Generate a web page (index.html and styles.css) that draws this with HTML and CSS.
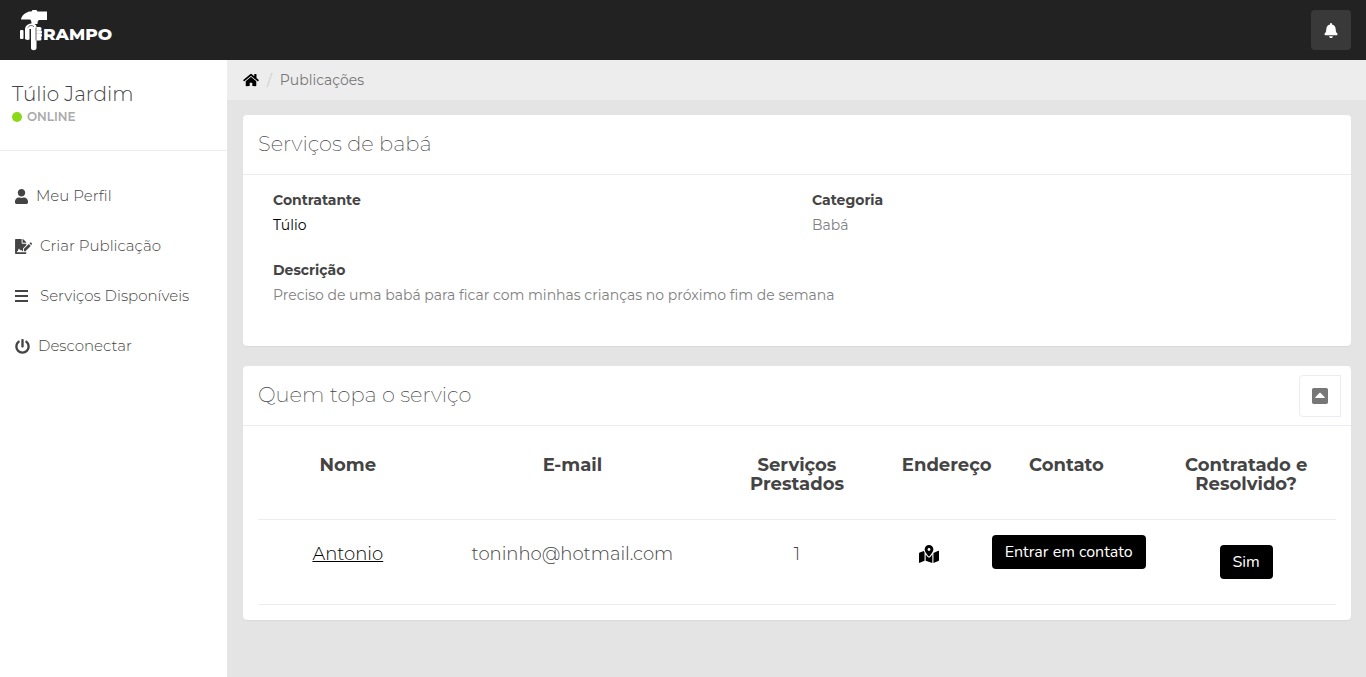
FILE: index.html
```html
<!DOCTYPE html>
<html lang="pt-BR">
<head>
<meta charset="utf-8">
<title>Trampo</title>
<meta name="viewport" content="width=device-width, initial-scale=1">
<link rel="stylesheet" href="styles.css">
</head>
<body>
<header class="topbar">
  <a class="brand" href="#" aria-label="Trampo">
    <svg class="brand-mark" viewBox="0 0 28 42" width="28" height="42" aria-hidden="true">
      <path fill="#fff" d="M1 10.500C1.500 7 4.500 4 9 2.500h2.500l1-1.500h4l1 1.500H27v8.500h-8c-1 .5-1.500 1.500-1.500 4h-6c0-2.500-.5-4-1.500-4.500z"/>
      <rect fill="#fff" x="0" y="21" width="3.500" height="9" rx="1"/>
      <path fill="#fff" d="M5 30V21c0-4 2.500-6 6-6.500 3.500-.3 5.500 1 5.500 3.500v21c0 3-5.500 3-5.500 0V20H9.500v10.500c-1.500.8-3 .5-4.500-.5z"/>
      <path fill="none" stroke="#222" stroke-width=".7" d="M10.500 31V20M8 18.500c1.500-2.500 4.500-2.500 6-.5"/>
      <rect fill="#fff" x="15.500" y="18" width="6" height="3.600" rx="1.500"/>
      <rect fill="#fff" x="15.500" y="21.200" width="6.500" height="3.600" rx="1.500"/>
      <rect fill="#fff" x="15.500" y="24.500" width="6.500" height="3.600" rx="1.500"/>
      <rect fill="#fff" x="15.500" y="27.800" width="6" height="3.600" rx="1.500"/>
      <path fill="none" stroke="#222" stroke-width=".7" d="M16 18.500v13"/>
    </svg>
    <span class="brand-name">RAMPO</span>
  </a>
  <button class="bell" type="button" aria-label="Notificações">
    <svg viewBox="0 0 448 512" width="14" height="15"><path d="M224 512c35.320 0 63.970-28.650 63.970-64H160.030c0 35.350 28.650 64 63.970 64zm215.390-149.710c-19.320-20.760-55.470-51.990-55.470-154.290 0-77.700-54.480-139.900-127.940-155.160V32c0-17.670-14.320-32-31.980-32s-31.980 14.330-31.980 32v20.840C118.560 68.100 64.080 130.300 64.080 208c0 102.300-36.150 133.530-55.470 154.290-6 6.450-8.660 14.160-8.610 21.710.11 16.400 12.980 32 32.100 32h383.800c19.120 0 32-15.600 32.100-32 .05-7.550-2.610-15.270-8.610-21.710z"/></svg>
  </button>
</header>
<div class="layout">
  <aside class="sidebar">
    <div class="profile">
      <div class="profile-name">Túlio Jardim</div>
      <div class="status">ONLINE</div>
    </div>
    <nav class="menu">
      <a href="#">
        <svg viewBox="0 0 448 512" width="13" height="15"><path d="M224 256c70.700 0 128-57.300 128-128S294.700 0 224 0 96 57.300 96 128s57.300 128 128 128zm89.600 32h-16.700c-22.200 10.200-46.900 16-72.900 16s-50.600-5.800-72.900-16h-16.700C60.200 288 0 348.200 0 422.400V464c0 26.500 21.500 48 48 48h352c26.500 0 48-21.500 48-48v-41.600c0-74.200-60.200-134.400-134.400-134.400z"/></svg>
        Meu Perfil
      </a>
      <a href="#">
        <svg viewBox="0 0 576 512" width="17" height="15"><path d="M24 0h200v136c0 13 11 24 24 24h136v49L272 320v96h-12c-10 0-14-6-19-15-14-28-50-33-72-11l-14-43c-7-20-31-20-38 0l-18 55c-2 8-9 14-18 14H64v32h320v40c0 13-11 24-24 24H24c-13 0-24-11-24-24V24C0 11 11 0 24 0z"/><path d="M256 0h6c6 0 12 3 17 7l98 98c4 5 7 11 7 17v6H256zM304 334l163-162 68 68-163 163v13h-68zM490 149l22-22c12-12 31-12 43 0l14 14c10 11 10 29 0 40l-11 34z"/></svg>
        Criar Publicação
      </a>
      <a href="#">
        <svg viewBox="0 0 17 15" width="17" height="15"><path d="M0 1h13v2H0zM0 6h13v2H0zM0 11h13v2H0z"/></svg>
        Serviços Disponíveis
      </a>
      <a href="#">
        <svg viewBox="0 0 512 512" width="15" height="15"><path d="M400 54.100c63 45 104 118.600 104 201.900 0 136.800-110.800 247.700-247.500 248C120 504.300 8.200 393 8 256.400 7.900 173.100 48.900 99.300 111.800 54.200c11.700-8.300 28-4.800 35 7.700L162.600 90c5.900 10.500 3.100 23.800-6.600 31-41.500 30.800-68 79.600-68 134.900-.1 92.300 74.500 168.100 168 168.100 91.600 0 168.600-74.200 168-169.100-.3-51.800-24.700-101.800-68.100-134-9.700-7.200-12.400-20.500-6.500-30.900l15.800-28.100c7-12.400 23.200-16.100 34.800-7.800zM296 264V24c0-13.300-10.700-24-24-24h-32c-13.300 0-24 10.700-24 24v240c0 13.300 10.700 24 24 24h32c13.300 0 24-10.700 24-24z"/></svg>
        Desconectar
      </a>
    </nav>
  </aside>
  <main class="main">
    <nav class="breadcrumb" aria-label="Trilha">
      <a href="#" aria-label="Início"><svg viewBox="0 0 576 512" width="16" height="14"><path d="M280.370 148.260L96 300.110V464a16 16 0 0 0 16 16l112.060-.29a16 16 0 0 0 15.920-16V368a16 16 0 0 1 16-16h64a16 16 0 0 1 16 16v95.640a16 16 0 0 0 16 16.050L464 480a16 16 0 0 0 16-16V300L295.670 148.260a12.190 12.190 0 0 0-15.300 0zM571.600 251.470L488 182.560V44.050a12 12 0 0 0-12-12h-56a12 12 0 0 0-12 12v72.610L318.470 43a48 48 0 0 0-61 0L4.340 251.470a12 12 0 0 0-1.600 16.900l25.500 31A12 12 0 0 0 45.150 301l235.220-193.740a12.190 12.190 0 0 1 15.300 0L530.900 301a12 12 0 0 0 16.900-1.600l25.500-31a12 12 0 0 0-1.700-16.930z"/></svg></a>
      <span class="slash">/</span>
      <span>Publicações</span>
    </nav>
    <div class="content">
      <section class="card">
        <div class="card-head"><h2>Serviços de babá</h2></div>
        <dl class="details">
          <div><dt>Contratante</dt><dd><a href="#">Túlio</a></dd></div>
          <div><dt>Categoria</dt><dd>Babá</dd></div>
          <div class="wide"><dt>Descrição</dt><dd>Preciso de uma babá para ficar com minhas crianças no próximo fim de semana</dd></div>
        </dl>
      </section>
      <section class="card">
        <div class="card-head">
          <h2>Quem topa o serviço</h2>
          <button class="collapse" type="button" aria-label="Recolher">
            <svg viewBox="0 32 448 448" width="16" height="16"><path d="M0 432V80c0-26.510 21.490-48 48-48h352c26.510 0 48 21.490 48 48v352c0 26.510-21.490 48-48 48H48c-26.510 0-48-21.490-48-48zm355.515-140.485l-123.030-123.030c-4.686-4.686-12.284-4.686-16.971 0L92.485 291.515c-7.560 7.560-2.206 20.485 8.485 20.485h246.059c10.691 0 16.045-12.926 8.486-20.485z"/></svg>
          </button>
        </div>
        <div class="table-wrap">
          <table class="people">
            <colgroup><col class="c2"><col class="c3"><col class="c2"><col class="c1"><col class="c2"><col class="c2"></colgroup>
            <thead>
              <tr><th>Nome</th><th>E-mail</th><th>Serviços Prestados</th><th>Endereço</th><th>Contato</th><th>Contratado e Resolvido?</th></tr>
            </thead>
            <tbody>
              <tr>
                <td><a class="name" href="#">Antonio</a></td>
                <td>toninho@hotmail.com</td>
                <td>1</td>
                <td><a class="map" href="#" aria-label="Ver no mapa"><svg viewBox="0 0 576 512" width="20" height="18"><path d="M288 0c-69.590 0-126 56.410-126 126 0 56.260 82.350 158.800 113.900 196.020 6.390 7.540 17.820 7.540 24.200 0C331.650 284.800 414 182.260 414 126 414 56.410 357.590 0 288 0zm0 168c-23.200 0-42-18.800-42-42s18.800-42 42-42 42 18.800 42 42-18.800 42-42 42zM20.120 215.950A32.006 32.006 0 0 0 0 245.660v250.320c0 11.320 11.430 19.060 21.940 14.860L160 448V214.920c-8.840-15.980-16.070-31.540-21.250-46.420L20.120 215.950zM288 359.670c-14.070 0-27.380-6.180-36.510-16.960-19.660-23.200-40.570-49.620-59.490-76.720v182l192 64V266c-18.920 27.090-39.820 53.520-59.490 76.720-9.130 10.770-22.440 16.950-36.510 16.950zm266.060-198.510L416 224v288l139.880-55.950A31.996 31.996 0 0 0 576 426.340V176.020c0-11.320-11.430-19.060-21.940-14.860z"/></svg></a></td>
                <td class="action contact"><button class="btn" type="button">Entrar em contato</button></td>
                <td class="action confirm"><button class="btn" type="button">Sim</button></td>
              </tr>
            </tbody>
          </table>
        </div>
      </section>
    </div>
  </main>
</div>
</body>
</html>
```
FILE: styles.css
```css
* { box-sizing: border-box; }
body {
  margin: 0;
  min-height: 100vh;
  display: flex;
  flex-direction: column;
  font: 300 15px/20px Montserrat, Inter, "Open Sans", sans-serif;
  color: #444;
  background: #e4e4e4;
}
a { color: inherit; text-decoration: none; }
svg { display: block; flex: none; fill: currentColor; }
h2, dl, dd { margin: 0; }

.topbar {
  display: flex;
  align-items: center;
  justify-content: space-between;
  height: 60px;
  padding: 0 15px 0 20px;
  background: #222;
}
.brand { display: flex; align-items: center; color: #fff; }
.brand-name { margin: 8px 0 0 -5px; font-size: 17px; font-weight: 800; }
.bell {
  display: grid;
  place-items: center;
  width: 40px;
  height: 40px;
  padding: 0;
  border: 0;
  border-radius: 4px;
  background: #393939;
  color: #fff;
}

.layout { display: flex; flex: 1; }
.sidebar { flex: none; width: 227px; background: #fff; }
.profile { height: 91px; padding: 22px 12px 0; border-bottom: 1px solid #e9ecf2; }
.profile-name { font-size: 20px; line-height: 25px; }
.status {
  display: flex;
  align-items: center;
  gap: 5px;
  font-size: 12px;
  font-weight: 600;
  color: #aaa;
}
.status::before {
  content: "";
  width: 10px;
  height: 10px;
  border-radius: 50%;
  background: #8ad919;
}
.menu { padding-top: 20px; }
.menu a {
  display: flex;
  align-items: center;
  gap: 8px;
  height: 50px;
  padding: 0 15px;
}

.main { flex: 1; min-width: 0; }
.breadcrumb {
  display: flex;
  align-items: center;
  gap: 8px;
  height: 40px;
  padding: 0 16px;
  font-size: 14px;
  font-weight: 400;
  color: #777;
  background: #ededed;
}
.breadcrumb a { color: #000; }
.slash { color: #ccc; }
.content { display: grid; gap: 20px; padding: 15px 15px 20px 16px; }

.card { background: #fff; border-radius: 4px; box-shadow: 0 1px 1px rgba(0, 0, 0, .05); }
.card-head {
  display: flex;
  align-items: center;
  justify-content: space-between;
  height: 60px;
  padding: 0 10px 0 15px;
  border-bottom: 1px solid #e9ecf2;
}
.card-head h2 { padding-bottom: 2px; font-size: 21px; font-weight: 200; line-height: 24px; }
.collapse {
  display: grid;
  place-items: center;
  width: 42px;
  height: 42px;
  padding: 0;
  border: 1px solid #e9ecf2;
  border-radius: 4px 0 0 4px;
  background: #fff;
  color: #777;
}
.details {
  display: grid;
  grid-template-columns: 1fr 1fr;
  gap: 20px 0;
  padding: 13px 15px 38px;
  font-size: 14px;
  line-height: 25px;
}
.details > div { padding: 0 15px; }
.details .wide { grid-column: 1 / -1; }
.details dt { font-weight: 700; }
.details dd { font-weight: 400; color: #808080; }
.details dd a { color: #000; }

.table-wrap { padding: 0 15px 15px; }
.people { width: 100%; table-layout: fixed; border-collapse: collapse; font-size: 18px; }
.c1 { width: 8.333%; }
.c2 { width: 16.667%; }
.c3 { width: 25%; }
.people th, .people td { text-align: center; vertical-align: top; border-bottom: 1px solid #e9ecf2; }
.people th { height: 93px; padding: 30px 15px 0; font-weight: 700; line-height: 19px; }
.people td { height: 85px; padding: 24px 15px 0; font-weight: 300; }
.name { color: #000; text-decoration: underline; }
.map { display: flex; justify-content: center; padding: 1px 5px 0 0; color: #000; }
.people .action { padding: 15px 0 0; }
.people .contact { padding-left: 15px; text-align: left; }
.people .confirm { padding-top: 25px; }
.btn {
  height: 34px;
  padding: 0 13px;
  border: 0;
  border-radius: 4px;
  background: #000;
  color: #fff;
  font: 400 16px/20px Nunito, "Nunito Sans", "Open Sans", sans-serif;
}
```
